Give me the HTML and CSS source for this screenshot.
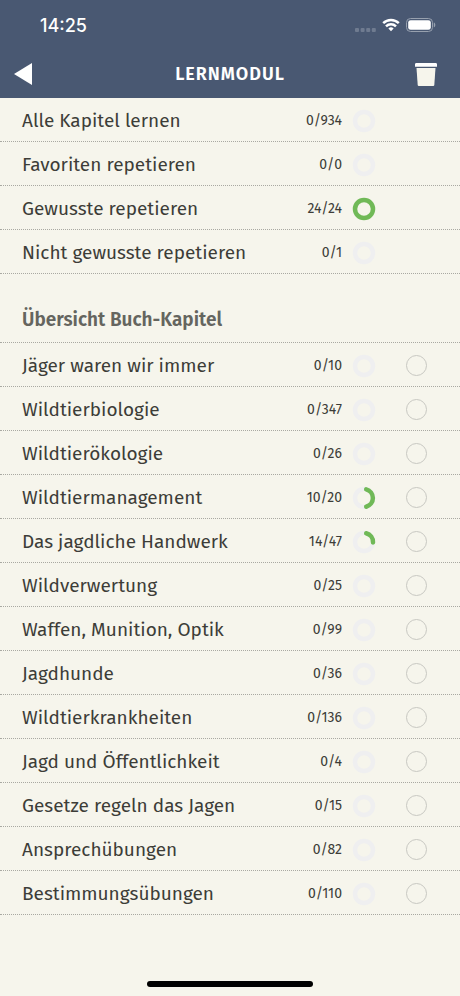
FILE: index.html
```html
<!DOCTYPE html>
<html lang="de">
<head>
<meta charset="utf-8">
<meta name="viewport" content="width=device-width, initial-scale=1">
<title>Lernmodul</title>
<link rel="stylesheet" href="styles.css">
</head>
<body>
<header class="top">
  <div class="status">
    <time class="clock">14:25</time>
    <div class="indicators">
      <svg class="signal" viewBox="0 0 21 4" aria-hidden="true"><rect width="4" height="4" rx="1"/><rect x="5.6" width="4" height="4" rx="1"/><rect x="11.2" width="4" height="4" rx="1"/><rect x="16.8" width="4" height="4" rx="1"/></svg>
      <svg class="wifi" viewBox="0 0 18 14" aria-hidden="true"><path d="M1.2 5.2a11.2 11.2 0 0 1 15.6 0M4 8.3a7.2 7.2 0 0 1 10 0"/><path class="solid" d="M9 13.2l-2.6-2.7a3.8 3.8 0 0 1 5.2 0z"/></svg>
      <svg class="battery" viewBox="0 0 30 14" aria-hidden="true"><rect class="case" x=".5" y=".5" width="26" height="13" rx="4"/><rect class="charge" x="2.2" y="2.2" width="22.6" height="9.6" rx="2.4"/><path class="tip" d="M27.8 4.6c2 .6 2 4.2 0 4.8z"/></svg>
    </div>
  </div>
  <nav class="bar">
    <button class="icon-button" type="button" aria-label="Zurück"><svg class="back" viewBox="0 0 18 22"><path d="M18 0v22L0 11z"/></svg></button>
    <h1 class="title">LERNMODUL</h1>
    <button class="icon-button end" type="button" aria-label="Löschen"><svg class="trash" viewBox="0 0 22 23"><path class="lid" d="M0 .8L1 0h20l1 .8v3H0z"/><path class="bin" d="M1.5 5h19L19.3 22q-.1 1-1 1H3.700q-.9 0-1-1z"/></svg></button>
  </nav>
</header>
<main class="content">
  <ul class="list">
    <li class="row"><a class="name" href="#alle">Alle Kapitel lernen</a><span class="count">0/934</span><svg class="ring" viewBox="0 0 24 24" aria-hidden="true"><circle class="track" cx="12" cy="12" r="9"/></svg></li>
    <li class="row"><a class="name" href="#favoriten">Favoriten repetieren</a><span class="count">0/0</span><svg class="ring" viewBox="0 0 24 24" aria-hidden="true"><circle class="track" cx="12" cy="12" r="9"/></svg></li>
    <li class="row"><a class="name" href="#gewusste">Gewusste repetieren</a><span class="count">24/24</span><svg class="ring" viewBox="0 0 24 24" aria-hidden="true"><circle class="done" cx="12" cy="12" r="9"/></svg></li>
    <li class="row"><a class="name" href="#nicht-gewusste">Nicht gewusste repetieren</a><span class="count">0/1</span><svg class="ring" viewBox="0 0 24 24" aria-hidden="true"><circle class="track" cx="12" cy="12" r="9"/></svg></li>
  </ul>
  <h2 class="section">Übersicht Buch-Kapitel</h2>
  <ul class="list">
    <li class="row"><label class="name" for="k1">Jäger waren wir immer</label><span class="count">0/10</span><svg class="ring" viewBox="0 0 24 24" aria-hidden="true"><circle class="track" cx="12" cy="12" r="9"/></svg><input class="pick" type="checkbox" id="k1"></li>
    <li class="row"><label class="name" for="k2">Wildtierbiologie</label><span class="count">0/347</span><svg class="ring" viewBox="0 0 24 24" aria-hidden="true"><circle class="track" cx="12" cy="12" r="9"/></svg><input class="pick" type="checkbox" id="k2"></li>
    <li class="row"><label class="name" for="k3">Wildtierökologie</label><span class="count">0/26</span><svg class="ring" viewBox="0 0 24 24" aria-hidden="true"><circle class="track" cx="12" cy="12" r="9"/></svg><input class="pick" type="checkbox" id="k3"></li>
    <li class="row"><label class="name" for="k4">Wildtiermanagement</label><span class="count">10/20</span><svg class="ring" viewBox="0 0 24 24" aria-hidden="true"><circle class="track" cx="12" cy="12" r="9"/><path class="done" d="M14.2 3.3a9 9 0 0 1 0 17.4"/></svg><input class="pick" type="checkbox" id="k4"></li>
    <li class="row"><label class="name" for="k5">Das jagdliche Handwerk</label><span class="count">14/47</span><svg class="ring" viewBox="0 0 24 24" aria-hidden="true"><circle class="track" cx="12" cy="12" r="9"/><path class="done" d="M14.2 3.3A9 9 0 0 1 21 12.4"/></svg><input class="pick" type="checkbox" id="k5"></li>
    <li class="row"><label class="name" for="k6">Wildverwertung</label><span class="count">0/25</span><svg class="ring" viewBox="0 0 24 24" aria-hidden="true"><circle class="track" cx="12" cy="12" r="9"/></svg><input class="pick" type="checkbox" id="k6"></li>
    <li class="row"><label class="name" for="k7">Waffen, Munition, Optik</label><span class="count">0/99</span><svg class="ring" viewBox="0 0 24 24" aria-hidden="true"><circle class="track" cx="12" cy="12" r="9"/></svg><input class="pick" type="checkbox" id="k7"></li>
    <li class="row"><label class="name" for="k8">Jagdhunde</label><span class="count">0/36</span><svg class="ring" viewBox="0 0 24 24" aria-hidden="true"><circle class="track" cx="12" cy="12" r="9"/></svg><input class="pick" type="checkbox" id="k8"></li>
    <li class="row"><label class="name" for="k9">Wildtierkrankheiten</label><span class="count">0/136</span><svg class="ring" viewBox="0 0 24 24" aria-hidden="true"><circle class="track" cx="12" cy="12" r="9"/></svg><input class="pick" type="checkbox" id="k9"></li>
    <li class="row"><label class="name" for="k10">Jagd und Öffentlichkeit</label><span class="count">0/4</span><svg class="ring" viewBox="0 0 24 24" aria-hidden="true"><circle class="track" cx="12" cy="12" r="9"/></svg><input class="pick" type="checkbox" id="k10"></li>
    <li class="row"><label class="name" for="k11">Gesetze regeln das Jagen</label><span class="count">0/15</span><svg class="ring" viewBox="0 0 24 24" aria-hidden="true"><circle class="track" cx="12" cy="12" r="9"/></svg><input class="pick" type="checkbox" id="k11"></li>
    <li class="row"><label class="name" for="k12">Ansprechübungen</label><span class="count">0/82</span><svg class="ring" viewBox="0 0 24 24" aria-hidden="true"><circle class="track" cx="12" cy="12" r="9"/></svg><input class="pick" type="checkbox" id="k12"></li>
    <li class="row"><label class="name" for="k13">Bestimmungsübungen</label><span class="count">0/110</span><svg class="ring" viewBox="0 0 24 24" aria-hidden="true"><circle class="track" cx="12" cy="12" r="9"/></svg><input class="pick" type="checkbox" id="k13"></li>
  </ul>
</main>
<footer class="home"><div class="home-indicator"></div></footer>
</body>
</html>
```
FILE: styles.css
```css
* {
  box-sizing: border-box;
}

body {
  margin: 0;
  min-height: 100vh;
  display: flex;
  flex-direction: column;
  background: #f6f5ec;
  color: #3d3d38;
  font-family: "Fira Sans", "Noto Sans", sans-serif;
  font-size: 19px;
}

svg {
  display: block;
}

.top {
  background: #495872;
  color: #fff;
}

.status {
  height: 50px;
  padding: 0 24px 0 40px;
  display: flex;
  align-items: center;
  justify-content: space-between;
}

.clock {
  font-family: Inter, sans-serif;
  font-size: 18px;
  font-weight: 500;
}

.indicators {
  display: flex;
  align-items: center;
  gap: 6px;
}

.signal {
  width: 21px;
  height: 4px;
  margin-top: 10px;
  fill: #6f7b90;
}

.wifi {
  width: 18px;
  height: 14px;
  fill: none;
  stroke: #fff;
  stroke-width: 2.5;
}

.wifi .solid {
  fill: #fff;
  stroke: none;
}

.battery {
  width: 30px;
  height: 14px;
}

.case {
  fill: none;
  stroke: #97a0ae;
}

.charge {
  fill: #fff;
}

.tip {
  fill: #97a0ae;
}

.bar {
  height: 48px;
  padding: 0 14px;
  display: grid;
  grid-template-columns: 1fr auto 1fr;
  align-items: center;
}

.icon-button {
  padding: 0;
  border: 0;
  background: none;
  cursor: pointer;
}

.end {
  justify-self: end;
  padding-right: 9px;
}

.back {
  width: 18px;
  height: 22px;
  fill: #fff;
}

.trash {
  width: 22px;
  height: 23px;
}

.lid {
  fill: #fff;
}

.bin {
  fill: #f6f5ec;
}

.title {
  margin: 0;
  font-size: 18px;
  line-height: 24px;
  font-weight: 600;
  letter-spacing: 1px;
}

.content {
  flex: 1;
}

.list {
  margin: 0;
  padding: 0;
  list-style: none;
}

.row {
  height: 44px;
  padding: 2px 33px 0 22px;
  display: grid;
  grid-template-columns: 1fr auto 24px 41px;
  column-gap: 10px;
  align-items: center;
  border-bottom: 1px dotted #a9a9a2;
}

.name {
  color: inherit;
  text-decoration: none;
  line-height: 24px;
}

.count {
  font-size: 14px;
  line-height: 24px;
}

.ring {
  width: 24px;
  height: 24px;
  fill: none;
  stroke-width: 4.5;
}

.track {
  stroke: #efeff0;
}

.done {
  stroke: #70b957;
  stroke-linecap: round;
}

.pick {
  appearance: none;
  justify-self: end;
  width: 21px;
  height: 21px;
  margin: 0;
  border: 1px solid #c8c8c2;
  border-radius: 50%;
}

.pick:checked {
  background: #70b957;
}

.section {
  margin: 0;
  padding: 34px 22px 10px;
  border-bottom: 1px dotted #a9a9a2;
  color: #65655f;
  font-size: 19px;
  line-height: 24px;
  font-weight: 600;
}

.home {
  padding: 9px 0;
  display: flex;
  justify-content: center;
}

.home-indicator {
  width: 36%;
  height: 6px;
  border-radius: 3px;
  background: #000;
}
```
